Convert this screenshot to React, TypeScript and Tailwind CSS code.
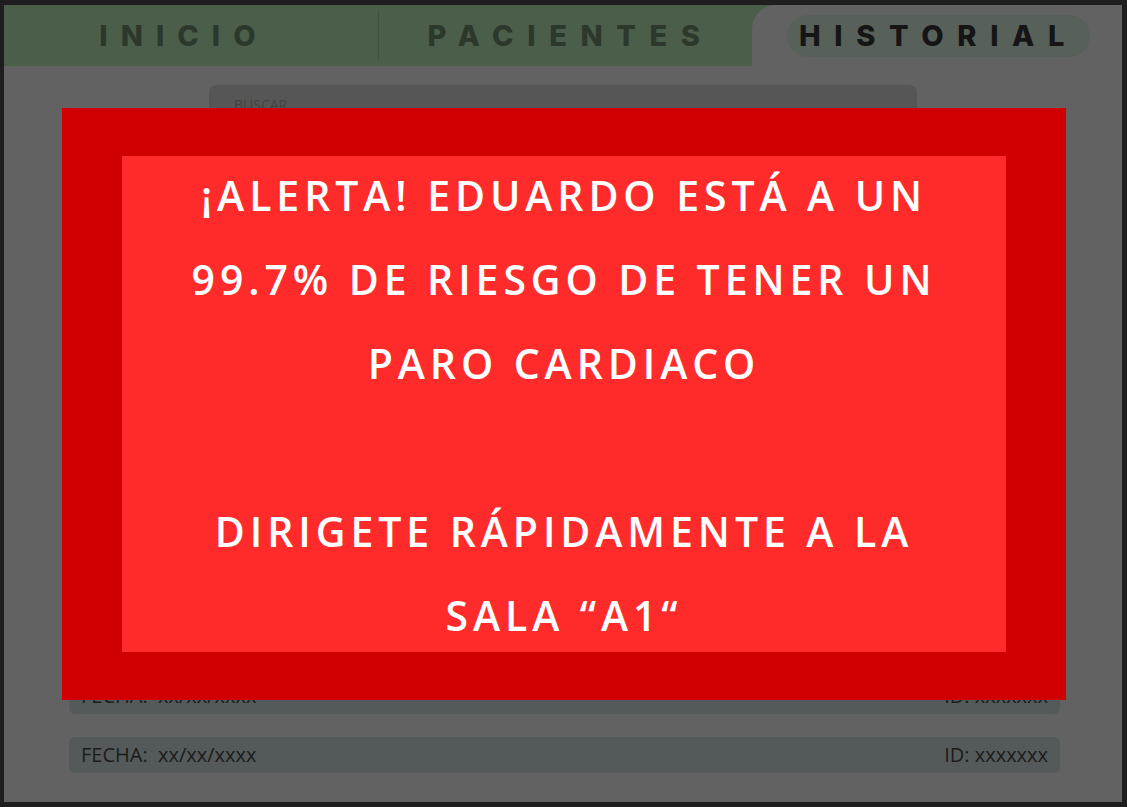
const rows = Array.from({ length: 10 });

const alertLines = [
  '¡ALERTA! EDUARDO ESTÁ A UN',
  '99.7% DE RIESGO DE TENER UN',
  'PARO CARDIACO',
  '',
  'DIRIGETE RÁPIDAMENTE A LA',
  'SALA “A1“',
];

function Tabs() {
  return (
    <div className="flex h-[61px] bg-[#4a5e49]">
      <div className="flex w-[374px] items-center justify-center pr-[14px]">
        <span className="font-['Inter',sans-serif] text-[29px] font-extrabold tracking-[0.45em] text-[#2c382c]">
          INICIO
        </span>
      </div>
      <div className="my-[5px] w-px bg-[#3f513f]" />
      <div className="flex w-[373px] items-center justify-center pl-[10px]">
        <span className="font-['Inter',sans-serif] text-[29px] font-extrabold tracking-[0.47em] text-[#2c382c]">
          PACIENTES
        </span>
      </div>
      <div className="flex flex-1 items-start rounded-tl-[24px] bg-[#626262] pl-[35px] pt-[10px]">
        <div className="flex h-[42px] w-[303px] items-center justify-center rounded-full bg-[#58605a]">
          <span className="font-['Inter',sans-serif] text-[29px] font-extrabold tracking-[0.47em] text-[#151515]">
            HISTORIAL
          </span>
        </div>
      </div>
    </div>
  );
}

export default function App() {
  return (
    <div className="relative h-[807px] w-[1127px] overflow-hidden bg-[#1e1e1e] pb-[5px] pl-[4px] pr-[5px] pt-[5px] font-['Open_Sans',sans-serif]">
      <div className="flex h-full flex-col bg-[#626262]">
        <Tabs />
        <div className="flex justify-center pt-[19px]">
          <div className="h-[44px] w-[708px] rounded-[8px] bg-[#565656] px-[25px] pt-[9px] text-[14px] text-[#444]">
            BUSCAR
          </div>
        </div>
        <div className="mt-auto flex flex-col gap-[23px] pb-[29px] pl-[65px] pr-[62px]">
          {rows.map((_, i) => (
            <div
              key={i}
              className="flex h-[36px] items-center justify-between rounded-[6px] bg-[#535a59] px-[12px] text-[20px] text-[#1c1c1c]"
            >
              <span>FECHA:&nbsp; xx/xx/xxxx</span>
              <span>ID: xxxxxxx</span>
            </div>
          ))}
        </div>
      </div>

      <div className="absolute left-[62px] top-[108px] h-[592px] w-[1004px] bg-[#d10000] px-[60px] py-[48px]">
        <div className="flex h-full flex-col items-center bg-[#ff2b2b]">
          <div className="-mt-[3px] flex flex-col items-center">
            {alertLines.map((line, i) => (
              <div
                key={i}
                className="h-[84px] shrink-0 text-center font-['Open_Sans',sans-serif] text-[41px] font-semibold leading-[84px] tracking-[0.12em] text-white"
              >
                {line || '\u00a0'}
              </div>
            ))}
          </div>
        </div>
      </div>
    </div>
  );
}
